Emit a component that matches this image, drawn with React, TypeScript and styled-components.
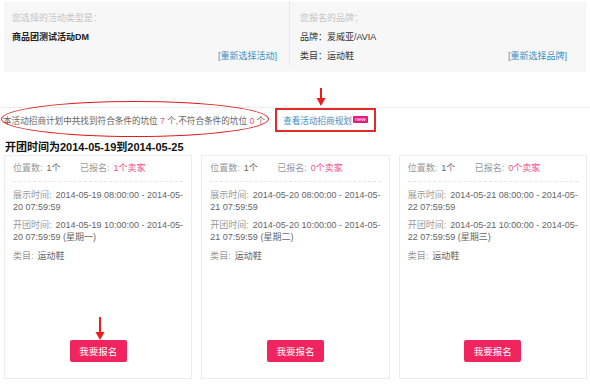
import styled, { createGlobalStyle } from "styled-components";

const GlobalStyle = createGlobalStyle`
  body {
    margin: 0;
    background: #fff;
    font-family: "Liberation Sans", "Noto Sans CJK SC", sans-serif;
    color: #333;
  }
`;

const Page = styled.div`
  position: relative;
  width: 590px;
  height: 385px;
  padding-top: 2px;
  box-sizing: border-box;
  overflow: hidden;
`;

const InfoPanel = styled.div`
  display: grid;
  grid-template-columns: 286px 1fr;
  margin: 0 4px;
  height: 70px;
  background: #f7f7f7;
  font-size: 9px;
`;

const InfoCol = styled.div<{ $divider?: boolean }>`
  padding: 7px 0 0;
  line-height: 19px;
  ${(p) => (p.$divider ? "border-right: 1px dotted #ddd;" : "")}
  padding-left: ${(p) => (p.$divider ? "8px" : "10px")};
  padding-right: ${(p) => (p.$divider ? "12px" : "19px")};
  margin-bottom: 6px;
`;

const Muted = styled.div`
  color: #c4c4c4;
`;

const Strong = styled.div`
  color: #222;
  font-weight: bold;
`;

const Plain = styled.div`
  color: #333;
`;

const LinkRow = styled.div`
  display: flex;
  justify-content: space-between;
  align-items: center;
`;

const Link = styled.a`
  color: #3a8fc4;
  text-decoration: none;
  margin-left: auto;
`;

const Divider = styled.div`
  margin-top: 35px;
  border-top: 1px solid #eee;
`;

const StatRow = styled.div`
  display: flex;
  align-items: center;
  height: 24px;
  padding-left: 3px;
  font-size: 8.6px;
  color: #666;
  white-space: nowrap;
`;

const Num = styled.span`
  color: #f0508a;
`;

const PlanBox = styled.div`
  display: flex;
  align-items: center;
  height: 24px;
  margin-left: 10px;
  padding: 0 6px;
  border: 2px solid #e32a2a;
  box-sizing: border-box;
`;

const PlanLink = styled.a`
  color: #3a8fc4;
  font-size: 8.6px;
  text-decoration: none;
`;

const NewBadge = styled.span`
  display: inline-block;
  margin-left: 1px;
  margin-top: -1px;
  padding: 0 2px;
  background: #e5197e;
  color: #fff;
  font-size: 6px;
  line-height: 7px;
  border-radius: 1px;
`;

const Title = styled.div`
  padding: 8px 0 0 5px;
  font-size: 11px;
  line-height: 14px;
  font-weight: bold;
  color: #111;
`;

const Cards = styled.div`
  display: grid;
  grid-template-columns: repeat(3, 1fr);
  gap: 9px;
  margin: 1px 3px 0 4px;
`;

const Card = styled.div`
  display: flex;
  flex-direction: column;
  height: 224px;
  box-sizing: border-box;
  border: 1px solid #ececec;
  padding: 6px 8px 16px;
  font-size: 9px;
  line-height: 12px;
  color: #666;
`;

const CardHead = styled.div`
  display: flex;
  padding-bottom: 7px;
  border-bottom: 1px dashed #e6e6e6;
  margin-bottom: 7px;
`;

const HeadItem = styled.div`
  width: 67px;
`;

const Label = styled.span`
  color: #999;
  margin-right: 4px;
`;

const Seller = styled.span`
  color: #f0508a;
`;

const Block = styled.div<{ $gap?: number }>`
  margin-top: ${(p) => p.$gap ?? 0}px;
  margin-bottom: 6px;
`;

const Line = styled.div`
  white-space: nowrap;
`;

const SignupButton = styled.button`
  align-self: center;
  margin-top: auto;
  width: 57px;
  height: 22px;
  border: none;
  border-radius: 2px;
  background: #f0255f;
  color: #fff;
  font-family: inherit;
  font-size: 9.5px;
  cursor: pointer;
`;

const Ellipse = styled.div`
  position: absolute;
  left: 1px;
  top: 101px;
  width: 268px;
  height: 36px;
  border: 1.5px solid #e31b1b;
  border-radius: 50%;
  box-sizing: border-box;
  pointer-events: none;
`;

const Arrow = styled.svg<{ $x: number; $y: number }>`
  position: absolute;
  left: ${(p) => p.$x - 5}px;
  top: ${(p) => p.$y}px;
  pointer-events: none;
`;

type Slot = {
  sold: number;
  day: string;
  next: string;
  weekday: string;
};

const slots: Slot[] = [
  { sold: 1, day: "19", next: "20", weekday: "星期一" },
  { sold: 0, day: "20", next: "21", weekday: "星期二" },
  { sold: 0, day: "21", next: "22", weekday: "星期三" },
];

const DownArrow = ({ x, y, length }: { x: number; y: number; length: number }) => (
  <Arrow $x={x} $y={y} width={10} height={length} viewBox={`0 0 10 ${length}`}>
    <line x1={5} y1={0} x2={5} y2={length - 7} stroke="#f01c1c" strokeWidth={2} />
    <polygon points={`0.5,${length - 8} 9.5,${length - 8} 5,${length}`} fill="#f01c1c" />
  </Arrow>
);

const App = () => {
  return (
    <>
      <GlobalStyle />
      <Page>
        <InfoPanel>
          <InfoCol $divider>
            <Muted>您选择的活动类型是：</Muted>
            <Strong>商品团测试活动DM</Strong>
            <LinkRow>
              <Link href="#">[重新选择活动]</Link>
            </LinkRow>
          </InfoCol>
          <InfoCol>
            <Muted>您报名的品牌：</Muted>
            <Plain>品牌：爱威亚/AVIA</Plain>
            <LinkRow>
              <Plain>类目：运动鞋</Plain>
              <Link href="#">[重新选择品牌]</Link>
            </LinkRow>
          </InfoCol>
        </InfoPanel>

        <Divider />
        <StatRow>
          <span>
            本活动招商计划中共找到符合条件的坑位 <Num>7</Num> 个,不符合条件的坑位 <Num>0</Num> 个
          </span>
          <PlanBox>
            <PlanLink href="#">查看活动招商规划</PlanLink>
            <NewBadge>new</NewBadge>
          </PlanBox>
        </StatRow>

        <Title>开团时间为2014-05-19到2014-05-25</Title>

        <Cards>
          {slots.map((s) => (
            <Card key={s.day}>
              <CardHead>
                <HeadItem>
                  <Label>位置数:</Label>1个
                </HeadItem>
                <div>
                  <Label>已报名:</Label>
                  <Seller>{s.sold}个卖家</Seller>
                </div>
              </CardHead>
              <Block>
                <Line>
                  <Label>展示时间:</Label>
                  2014-05-{s.day} 08:00:00 - 2014-05-
                </Line>
                <Line>{s.next} 07:59:59</Line>
              </Block>
              <Block>
                <Line>
                  <Label>开团时间:</Label>
                  2014-05-{s.day} 10:00:00 - 2014-05-
                </Line>
                <Line>
                  {s.next} 07:59:59 ({s.weekday})
                </Line>
              </Block>
              <Block $gap={1}>
                <Label>类目:</Label>运动鞋
              </Block>
              <SignupButton>我要报名</SignupButton>
            </Card>
          ))}
        </Cards>

        <Ellipse />
        <DownArrow x={321} y={88} length={18} />
        <DownArrow x={100} y={317} length={23} />
      </Page>
    </>
  );
};

export default App;
